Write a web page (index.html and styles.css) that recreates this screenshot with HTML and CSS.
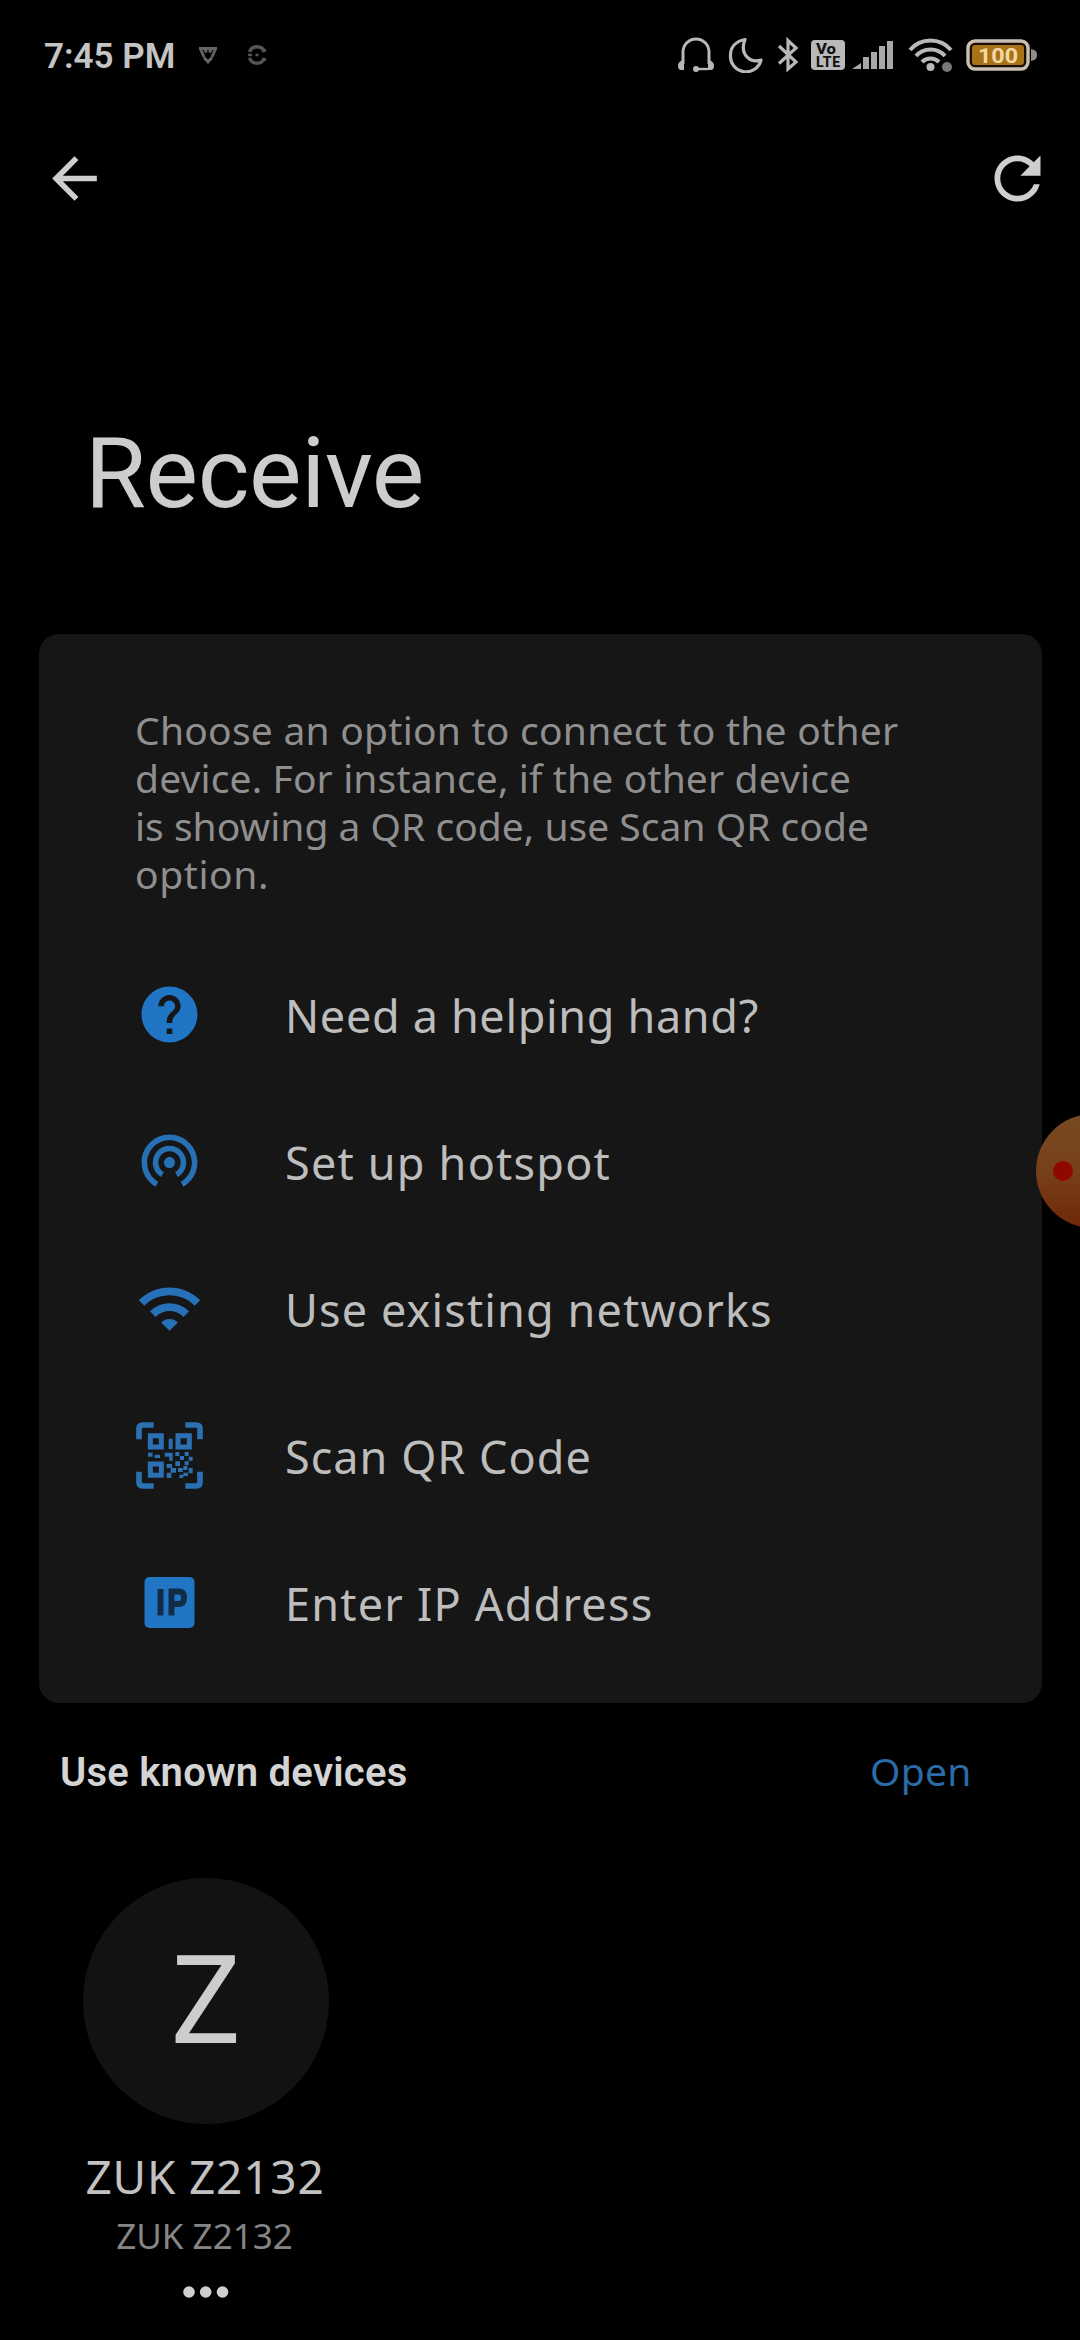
FILE: index.html
```html
<!DOCTYPE html>
<html lang="en">
<head>
<meta charset="utf-8">
<title>Receive</title>
<link rel="stylesheet" href="styles.css">
</head>
<body>
<div class="screen">
  <header class="status">
    <span class="time">7:45 PM</span>
    <svg class="notif" width="20" height="20" viewBox="0 0 20 20" fill="none" stroke="#666" stroke-width="2.8"><path d="M1 3.5H19M2.5 4L6 12M17.500 4L14 12M6 12.500L10 17L14 12.500M7 4.500l1.500 3M13 4.500l-1.500 3"/></svg>
    <svg class="notif second" width="20" height="20" viewBox="0 0 20 20" fill="none" stroke="#555" stroke-width="3.400"><path d="M17.500 7A8 8 0 0 0 2.500 7M2.500 13A8 8 0 0 0 17.500 13" /><path d="M1 10h4M15 6l4-1M15 14l4 1M8.500 10h3" stroke-width="2.500"/></svg>
    <div class="system">
      <svg width="38" height="36" viewBox="0 0 38 36" fill="none" stroke="#b8b8b8" stroke-width="3"><path d="M6 27V15A13 13 0 0 1 32 15V27"/><path d="M1 29c0-3 2-5.500 6-6v10H4c-2 0-3-2-3-4zM37 29c0-3-2-5.500-6-6v10h3c2 0 3-2 3-4z" fill="#b8b8b8" stroke="none"/><path d="M31 32H19" stroke-width="2.400"/><circle cx="19" cy="32" r="3" fill="#b8b8b8" stroke="none"/></svg>
      <svg class="moon" width="36" height="36" viewBox="0 0 36 36" fill="none" stroke="#b8b8b8" stroke-width="3.200" stroke-linejoin="round"><path d="M17 2.500C7 4.500 2.500 11 2.500 18A15.500 15.500 0 0 0 33 23C23 26.500 11 18 17 2.500z"/></svg>
      <svg class="bt" width="22" height="36" viewBox="0 0 22 36" fill="none" stroke="#b8b8b8" stroke-width="3.200"><path d="M2 9L19 25L11 32V3.500L19 11L2 26.500"/></svg>
      <svg class="volte" width="34" height="30" viewBox="0 0 34 30"><rect width="34" height="30" rx="4" fill="#b9b9b9"/><text x="5" y="13.500" textLength="20" lengthAdjust="spacingAndGlyphs">Vo</text><text x="5" y="26.500" textLength="24">LTE</text></svg>
      <svg class="signal" width="41" height="30" viewBox="0 0 41 30" fill="#a8a8a8"><path d="M0 29C3 27 6 25 9 23V29z"/><rect x="11" y="17" width="6" height="12"/><rect x="19" y="12" width="6" height="17"/><rect x="27" y="6" width="6" height="23"/><rect x="35" y="1" width="6" height="28"/></svg>
      <svg class="net" width="46" height="36" viewBox="0 0 46 36" fill="none" stroke="#b8b8b8" stroke-width="4"><path d="M2 13A27 27 0 0 1 43 13M8 19A19.500 19.500 0 0 1 37 19M14 25A12 12 0 0 1 31 25"/><circle cx="22.500" cy="30" r="4" fill="#b8b8b8" stroke="none"/><circle cx="39" cy="30" r="5" fill="#777" stroke="none"/></svg>
      <svg class="battery" width="72" height="32" viewBox="0 0 72 32"><rect x="2" y="2" width="60" height="28" rx="7" fill="#1c0f00" stroke="#c9c0b2" stroke-width="3.400"/><rect x="6" y="6" width="52" height="20" rx="3" fill="#a87216"/><path d="M65 10c5 1 6 3 6 6s-1 5-6 6z" fill="#8f8c86"/><text class="level" x="12" y="23.500" textLength="40" lengthAdjust="spacingAndGlyphs">100</text></svg>
    </div>
  </header>
  <nav class="appbar">
    <svg width="67" height="67" viewBox="0 0 24 24" fill="#cfcfcf"><path d="M20 11H7.830l5.590-5.590L12 4l-8 8 8 8 1.410-1.410L7.830 13H20v-2z"/></svg>
    <svg width="69" height="69" viewBox="0 0 24 24" fill="#cfcfcf"><path d="M17.650 6.350C16.200 4.900 14.210 4 12 4c-4.420 0-7.990 3.580-7.990 8s3.570 8 7.990 8c3.730 0 6.840-2.550 7.730-6h-2.080c-.820 2.330-3.040 4-5.650 4-3.310 0-6-2.690-6-6s2.690-6 6-6c1.660 0 3.140.690 4.220 1.780L13 11h7V4l-2.350 2.350z"/></svg>
  </nav>
  <h1 class="title">Receive</h1>
  <main class="card">
    <p class="hint">
      <span class="l1">Choose an option to connect to the other</span>
      <span class="l2">device. For instance, if the other device</span>
      <span class="l3">is showing a QR code, use Scan QR code</span>
      <span class="l4">option.</span>
    </p>
    <ul class="options">
      <li>
        <svg width="67" height="67" viewBox="0 0 24 24" fill="#2175c5"><path d="M12 2C6.480 2 2 6.480 2 12s4.480 10 10 10 10-4.480 10-10S17.520 2 12 2zm1 17h-2v-2h2v2zm2.070-7.750l-.900.920C13.450 12.900 13 13.500 13 15h-2v-.500c0-1.100.450-2.100 1.170-2.830l1.240-1.260c.370-.360.590-.860.590-1.410 0-1.100-.900-2-2-2s-2 .900-2 2H8c0-2.210 1.790-4 4-4s4 1.790 4 4c0 .880-.360 1.680-.930 2.250z"/></svg>
        <span class="o1">Need a helping hand?</span>
      </li>
      <li>
        <svg width="67" height="67" viewBox="0 .65 24 24" fill="#2770b4"><path d="M12 11c-1.100 0-2 .900-2 2s.900 2 2 2 2-.900 2-2-.900-2-2-2zm6 2c0-3.310-2.690-6-6-6s-6 2.690-6 6c0 2.220 1.210 4.150 3 5.190l1-1.740c-1.190-.700-2-1.970-2-3.450 0-2.210 1.790-4 4-4s4 1.790 4 4c0 1.480-.810 2.750-2 3.450l1 1.740c1.790-1.040 3-2.970 3-5.190zM12 3C6.480 3 2 7.480 2 13c0 3.700 2.010 6.920 4.990 8.650l1-1.730C5.610 18.530 4 15.960 4 13c0-4.420 3.580-8 8-8s8 3.580 8 8c0 2.960-1.610 5.530-4 6.920l1 1.730c2.990-1.730 5-4.950 5-8.650 0-5.520-4.480-10-10-10z"/></svg>
        <span class="o2">Set up hotspot</span>
      </li>
      <li>
        <svg width="67" height="67" viewBox="0 0 24 24" fill="#2771b8"><path d="M1 9l2 2c4.970-4.970 13.030-4.970 18 0l2-2C16.930 2.930 7.080 2.930 1 9zm8 8l3 3 3-3c-1.650-1.660-4.340-1.660-6 0zm-4-4l2 2c2.760-2.760 7.240-2.760 10 0l2-2C15.140 9.140 8.870 9.140 5 13z"/></svg>
        <span class="o3">Use existing networks</span>
      </li>
      <li>
        <svg width="67" height="67" viewBox="0 0 201 201" fill="none" stroke="#2a70b2"><path stroke-width="17" d="M9 52V20Q9 9 20 9H53M148 9H181Q192 9 192 20V52M192 149V181Q192 192 181 192H148M53 192H20Q9 192 9 181V149"/><path stroke-width="15" d="M43 41H76V75H43zM126 41H160V75H126zM43 126H76V160H43z"/><path fill="#2a70b2" stroke="none" d="M98 50h12v32H98zM36 92h14v12H36zM56 98h16v10H56zM86 92h24v24h-10v-12H86zM118 90h12v12h-12zM132 102h12v12h-12zM146 90h12v12h-12zM158 104h12v12h-12zM118 118h14v14h-14zM146 118h12v12h-12zM92 126h16v12H92zM104 138h16v14h-16zM92 152h14v16H92zM126 138h14v12h-14zM142 132h12v12h-12zM158 138h12v16h-12zM142 152h14v10h-14zM130 158h12v10h-12z"/></svg>
        <span class="o4">Scan QR Code</span>
      </li>
      <li>
        <svg width="67" height="67" viewBox="0 0 67 67"><rect x="8.500" y="8" width="50" height="51" rx="5" fill="#2175c5"/><g fill="none" stroke="#122c46" stroke-width="6"><path d="M24.500 20V46.500M35.500 46.500V22.500H42.500Q48 22.500 48 28.500Q48 35 42.500 35H36"/></g></svg>
        <span class="o5">Enter IP Address</span>
      </li>
    </ul>
  </main>
  <section class="known">
    <h2>Use known devices</h2>
    <a class="open">Open</a>
  </section>
  <section class="device">
    <div class="avatar">Z</div>
    <div class="name">ZUK Z2132</div>
    <div class="sub">ZUK Z2132</div>
    <svg width="46" height="20" viewBox="0 0 46 20" fill="#cfcfcf"><circle cx="6" cy="10" r="5.800"/><circle cx="22.700" cy="10" r="5.800"/><circle cx="39.500" cy="10" r="5.800"/></svg>
  </section>
  <div class="bubble"><i></i></div>
</div>
</body>
</html>
```
FILE: styles.css
```css
* { box-sizing: border-box; }
body { margin: 0; background: #000; }
h1, h2, p, ul { margin: 0; padding: 0; font-weight: 400; }
svg { display: block; flex: none; }

.screen {
  position: relative;
  width: 1080px;
  height: 2340px;
  overflow: hidden;
  background: #000;
  color: #c8c8c8;
  font-family: "Noto Sans", sans-serif;
  white-space: nowrap;
}

.status {
  display: flex;
  align-items: center;
  height: 112px;
  padding: 0 42px 0 44px;
  font-family: Roboto, sans-serif;
}
.time { width: 130px; font-size: 35px; font-weight: 600; color: #c4c4c4; }
.notif { margin: 0 0 3px 24px; }
.notif.second { margin-left: 29px; }
.system { display: flex; align-items: center; margin: 0 0 3px auto; }
.moon { margin-left: 13px; }
.bt { margin-left: 13px; }
.volte { margin-left: 12px; }
.signal { margin-left: 7px; }
.net { margin-left: 15px; }
.battery { margin-left: 12px; }
.volte text { font: 800 14px Roboto, sans-serif; fill: #111; }
.battery .level { font: 700 21px Roboto, sans-serif; fill: #f3d9a4; }

.appbar {
  display: flex;
  align-items: center;
  justify-content: space-between;
  height: 132px;
  padding: 0 28px 0 41px;
}

.title {
  margin: 169px 0 101px 85px;
  font: 400 99px/120px Roboto, sans-serif;
  letter-spacing: -.4px;
  color: #cdcdcd;
}

.card {
  height: 1069px;
  margin: 0 38px 0 39px;
  padding: 72px 0 0 96px;
  border-radius: 20px;
  background: #161616;
}
.hint { font-size: 39px; line-height: 48px; color: #8f8f8f; }
.hint span { display: block; }
.l1 { letter-spacing: .24px; }
.l2 { letter-spacing: .14px; }
.l3 { letter-spacing: .01px; }
.l4 { letter-spacing: .6px; }

.options { margin-top: 44px; list-style: none; font-size: 45px; line-height: 60px; color: #bdbdbd; }
.options li { display: flex; align-items: center; height: 147.2px; }
.options svg { margin: 0 82px 3px 1px; }
.o1 { letter-spacing: .66px; }
.o2 { letter-spacing: 1.2px; }
.o3 { letter-spacing: 1.12px; }
.o4 { letter-spacing: 1.02px; }
.o5 { letter-spacing: 1.2px; }

.known {
  display: flex;
  align-items: center;
  justify-content: space-between;
  height: 100px;
  margin-top: 19px;
  padding-left: 60px;
}
.known h2 { padding-top: 1px; font: 600 40px/48px Roboto, sans-serif; letter-spacing: .24px; color: #d4d4d4; }
.open { width: 210px; padding-bottom: 4px; font-size: 39px; letter-spacing: .3px; color: #2a6ba8; }

.device {
  display: flex;
  flex-direction: column;
  align-items: center;
  width: 246px;
  margin: 56px 0 0 83px;
}
.avatar {
  width: 246px;
  height: 246px;
  border-radius: 50%;
  background: #121212;
  text-align: center;
  font-size: 122px;
  line-height: 236px;
  color: #cdcdcd;
}
.name { margin: 22px 2px 0 0; font-size: 46px; line-height: 60px; letter-spacing: .8px; color: #c2c2c2; }
.sub { margin: 8px 3px 24px 0; font-size: 35px; line-height: 44px; color: #858585; }

/* floating recorder button, docked past the right edge */
.bubble {
  position: absolute;
  left: 1036px;
  top: 1114px;
  display: flex;
  align-items: center;
  width: 114px;
  height: 114px;
  padding-left: 17px;
  border-radius: 50%;
  background: linear-gradient(#764a22, #77401a 50%, #702708);
}
.bubble i { width: 20px; height: 20px; border-radius: 50%; background: #8f0800; }
```
